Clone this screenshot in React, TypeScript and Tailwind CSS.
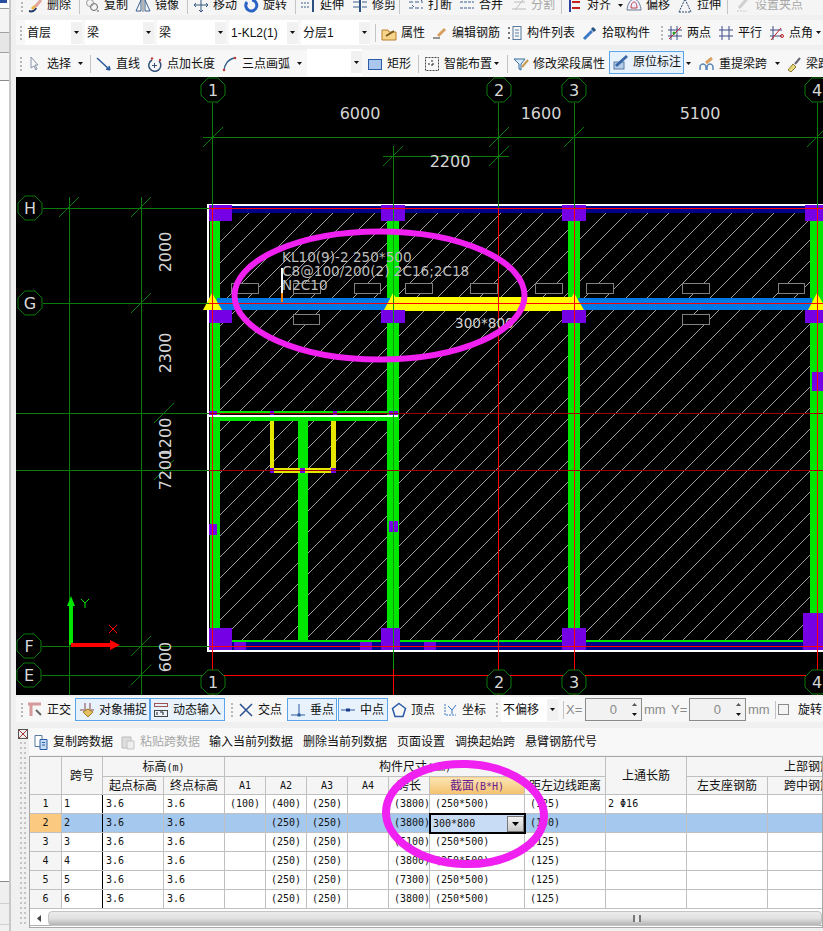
import React from "react";

const mono = "[font-family:'DejaVu_Sans_Mono',monospace] text-[10px]";

function I({ children }: { children: React.ReactNode }) {
  return (
    <svg viewBox="0 0 16 16" className="w-4 h-4 shrink-0" fill="none">
      {children}
    </svg>
  );
}

function Tool({
  icon,
  label,
  grey,
  className = "",
}: {
  icon?: React.ReactNode;
  label: string;
  grey?: boolean;
  className?: string;
}) {
  return (
    <div className={`flex items-center shrink-0 h-full ${className}`}>
      <div className="w-5 flex items-center shrink-0">{icon}</div>
      <span className={`text-xs leading-none whitespace-nowrap ${grey ? "text-[#a8a8a8]" : "text-[#111]"}`}>{label}</span>
    </div>
  );
}

function Grip({ className = "" }: { className?: string }) {
  return (
    <div className={`flex flex-col items-center justify-center gap-[2px] shrink-0 ${className}`}>
      {[0, 1, 2, 3].map((i) => (
        <div key={i} className="w-[2px] h-[2px] bg-[#b8b8b8]" />
      ))}
    </div>
  );
}

function Sep({ className = "" }: { className?: string }) {
  return <div className={`w-px h-[18px] bg-[#c4c4c4] shrink-0 ${className}`} />;
}

function Caret({ className = "" }: { className?: string }) {
  return (
    <svg viewBox="0 0 5 3" className={`w-[5px] h-[3px] shrink-0 ${className}`}>
      <path d="M0 0h5L2.5 3z" fill="#111" />
    </svg>
  );
}

function Select({ label, className = "" }: { label?: string; className?: string }) {
  return (
    <div className={`h-full bg-white flex items-center shrink-0 ${className}`}>
      <span className="flex-1 pl-[2px] text-xs leading-none whitespace-nowrap text-[#111]">{label}</span>
      <div className="w-[11px] h-[22px] bg-[#f1f1f1] flex items-center justify-center">
        <Caret />
      </div>
    </div>
  );
}

function Spin({ className = "" }: { className?: string }) {
  return (
    <div className={`h-[23px] border border-[#8a8a8a] bg-[#f2f2f2] flex items-center shrink-0 ${className}`}>
      <span className="flex-1 text-right pr-[10px] text-[13px] leading-none text-[#8a8a8a]">0</span>
      <div className="w-[14px] flex flex-col items-center gap-[7px]">
        <svg viewBox="0 0 5 3" className="w-[5px] h-[3px]"><path d="M0 3h5L2.5 0z" fill="#555" /></svg>
        <Caret />
      </div>
    </div>
  );
}

// ---- toolbar icons ----
const icons = {
  brush: (
    <I>
      <path d="M2 14c3 1 6 0 7-3" stroke="#223a66" strokeWidth="2" />
      <path d="M8 10l6-7" stroke="#e0a89a" strokeWidth="3" />
      <path d="M5 12l3-3" stroke="#e8b64c" strokeWidth="3" />
    </I>
  ),
  copy: (
    <I>
      <circle cx="10" cy="10" r="3.5" stroke="#666" />
      <circle cx="6" cy="6" r="3.5" stroke="#999" />
      <path d="M1 2h2M13 14h2" stroke="#555" />
    </I>
  ),
  mirror: (
    <I>
      <path d="M1 14L6 3v11zM15 14L10 3v11z" stroke="#37618f" />
      <path d="M8 1v14" stroke="#777" />
    </I>
  ),
  move: (
    <I>
      <path d="M8 1v14M1 8h14M8 1L6 3M8 1l2 2M8 15l-2-2M8 15l2-2M1 8l2-2M1 8l2 2M15 8l-2-2M15 8l-2 2" stroke="#34587f" />
    </I>
  ),
  rotate: (
    <I>
      <path d="M9 3a5.5 5.5 0 1 1-5 2" stroke="#2a63c4" strokeWidth="3" />
    </I>
  ),
  extend: (
    <I>
      <path d="M1 6h8M1 10h8" stroke="#3a5f8f" strokeDasharray="2 1" />
      <path d="M13 1v14" stroke="#2a4f80" strokeWidth="2" />
    </I>
  ),
  trim: (
    <I>
      <path d="M1 5h6M1 10h6M10 5h5M10 10h5" stroke="#3a5f8f" />
      <path d="M8 1v14" stroke="#2a4f80" strokeWidth="2" />
    </I>
  ),
  split: (
    <I>
      <path d="M1 5h14M1 11h14" stroke="#3a5f8f" strokeDasharray="4 2" />
      <path d="M12 2l2 2M4 8l2 2" stroke="#3a5f8f" />
    </I>
  ),
  merge: (
    <I>
      <path d="M1 5h14M1 11h14" stroke="#3a5f8f" strokeDasharray="3 1" />
    </I>
  ),
  cut: (
    <I>
      <path d="M1 12h14M3 5h11M4 13l8-10" stroke="#bcbcbc" />
    </I>
  ),
  align: (
    <I>
      <path d="M3 1v14" stroke="#2a3f9f" strokeWidth="2" />
      <path d="M5 5h8M5 11h8" stroke="#c02020" strokeWidth="2" />
    </I>
  ),
  offset: (
    <I>
      <path d="M1 13c0-4 3-11 7-11s7 7 7 11z" stroke="#6a7a90" fill="#eef" />
      <path d="M5 11c0-3 1-6 3-6s3 3 3 6z" stroke="#c04040" />
    </I>
  ),
  stretch: (
    <I>
      <path d="M2 15h12L8 2z" stroke="#2a4470" strokeDasharray="2 1" />
    </I>
  ),
  grip: (
    <I>
      <path d="M2 14h10" stroke="#c8c8c8" strokeDasharray="2 1" />
      <path d="M4 11l8-9" stroke="#d0d0d0" strokeWidth="3" />
    </I>
  ),
  props: (
    <I>
      <path d="M1 5h6l1 2h7v8H1z" fill="#f6d58b" stroke="#b87f2e" />
      <path d="M5 11l8-5" stroke="#7a5a20" strokeWidth="2" />
    </I>
  ),
  edit: (
    <I>
      <path d="M1 13h7" stroke="#333" />
      <path d="M6 11l7-7" stroke="#d8a060" strokeWidth="3" />
    </I>
  ),
  list: (
    <I>
      <path d="M2 2v2M2 7v2M2 12v2" stroke="#777" strokeWidth="2" />
      <rect x="6" y="1.5" width="8" height="13" stroke="#5a7aa0" />
      <path d="M8 5h4M8 8h4M8 11h4" stroke="#5a7aa0" />
    </I>
  ),
  pick: (
    <I>
      <path d="M2 14l8-8" stroke="#3a78c8" strokeWidth="3" />
      <path d="M10 3l3 3" stroke="#22507f" strokeWidth="3" />
    </I>
  ),
  twoPt: (
    <I>
      <path d="M4 1v14M10 1v14M1 5h14M1 11h14" stroke="#3c4c88" />
      <path d="M2 14L14 2" stroke="#c02020" />
      <circle cx="7" cy="8" r="1.5" fill="#20a020" />
    </I>
  ),
  parallel: (
    <I>
      <path d="M4 1v14M11 1v14M1 5h14M1 11h14" stroke="#3c4c88" />
    </I>
  ),
  angle: (
    <I>
      <path d="M4 1v14M1 5h12M1 11h12" stroke="#3c4c88" />
      <path d="M2 15L12 3" stroke="#c02020" />
      <circle cx="13" cy="11" r="1.5" stroke="#c02020" />
    </I>
  ),
  arrow: (
    <I>
      <path d="M4 1v11l3-2 2 4 1-1-2-4h3z" fill="#f6f6f6" stroke="#8a94a8" />
    </I>
  ),
  line: (
    <I>
      <path d="M1 2l13 12M14 14l-4-1M14 14l-1-4" stroke="#2a5c9c" strokeWidth="1.5" />
    </I>
  ),
  ptLen: (
    <I>
      <path d="M12 5a6 6 0 1 1-7-1" stroke="#34507a" strokeWidth="1.5" />
      <path d="M5 9.5h5M7.5 7v5" stroke="#34507a" />
      <circle cx="5" cy="2.5" r="1.2" fill="#c04040" />
      <circle cx="13" cy="4" r="1.2" fill="#c04040" />
    </I>
  ),
  arc: (
    <I>
      <path d="M2 15C2 9 6 3 13 2" stroke="#30608f" strokeWidth="1.5" />
      <circle cx="2" cy="14" r="1.3" fill="#c04040" />
      <circle cx="13" cy="2" r="1.3" fill="#c04040" />
    </I>
  ),
  rect: (
    <I>
      <rect x="1.5" y="3.5" width="13" height="10" fill="#a9c6ec" stroke="#2a5caa" />
    </I>
  ),
  smart: (
    <I>
      <rect x="1.5" y="1.5" width="13" height="13" stroke="#444" strokeDasharray="2 1" />
      <path d="M8 4v8M4 8h8" stroke="#222" strokeDasharray="2 2" />
    </I>
  ),
  modify: (
    <I>
      <path d="M1 3h11L8 8v6l-2-1V8z" stroke="#3a6f9f" fill="#d7ebfa" />
      <path d="M9 11l6-7" stroke="#c89a50" strokeWidth="2" />
    </I>
  ),
  mark: (
    <I>
      <rect x="1" y="8" width="10" height="7" fill="#b4cde8" stroke="#5a7aa0" />
      <path d="M3 12L14 2" stroke="#3a68a8" strokeWidth="3" />
    </I>
  ),
  respan: (
    <I>
      <path d="M1 14v-3c0-2 2-3 3-3s3 1 3 3v3M8 14v-3c0-2 2-3 3-3s3 1 3 3v3" stroke="#5a88b8" strokeWidth="1.5" />
      <path d="M7 7l6-5" stroke="#d8a060" strokeWidth="3" />
    </I>
  ),
  sweep: (
    <I>
      <path d="M2 14l5-6 3 3-5 5z" fill="#e8d880" stroke="#8a7a30" />
      <path d="M9 8l5-6" stroke="#667" strokeWidth="2" />
    </I>
  ),
  ortho: (
    <I>
      <path d="M1 2h13M4 2v12" stroke="#d69a9a" strokeWidth="3" />
      <path d="M9 8l5 5" stroke="#666" strokeWidth="2" />
    </I>
  ),
  snap: (
    <I>
      <path d="M1 8h14M6 1v6M11 1v6" stroke="#844" />
      <path d="M4 10l5-3 5 3-5 5z" fill="#e4c060" stroke="#a07820" />
    </I>
  ),
  dyn: (
    <I>
      <rect x="1.5" y="1.5" width="13" height="3" stroke="#a05050" />
      <rect x="1.5" y="8.5" width="13" height="6" stroke="#444" />
      <path d="M4 10v3M7 10h3v3" stroke="#222" />
    </I>
  ),
  cross: (
    <I>
      <path d="M2 2l12 12M14 2L2 14" stroke="#2a4f90" strokeWidth="1.5" />
    </I>
  ),
  perp: (
    <I>
      <path d="M1 13h14M9 2v11" stroke="#2a5c9c" />
      <rect x="7.5" y="11.5" width="3" height="3" fill="#2a5c9c" />
    </I>
  ),
  mid: (
    <I>
      <path d="M1 8h14" stroke="#2a5c9c" />
      <rect x="6" y="6.5" width="4" height="3" fill="#1a3c8c" />
    </I>
  ),
  vertex: (
    <I>
      <path d="M8 1.5l6.5 5-2.5 8H4l-2.5-8z" stroke="#2a5ca8" strokeWidth="1.5" />
    </I>
  ),
  coord: (
    <I>
      <path d="M3 2v11h11" stroke="#3a78c8" strokeDasharray="2 1" />
      <path d="M6 4l4 4 4-5M10 8v4" stroke="#3a78c8" />
    </I>
  ),
  copyDoc: (
    <I>
      <path d="M2 1.5h7v11H2z" fill="#fff" stroke="#5a7aa0" />
      <path d="M7 5.5h7v10H7z" fill="#c6dcf4" stroke="#2a5ca8" />
      <path d="M9 8.5h3M9 11h3" stroke="#2a5ca8" />
    </I>
  ),
  paste: (
    <I>
      <path d="M2 3h9v11H2z" fill="#ddd" stroke="#bbb" />
      <path d="M7 7h7v8H7z" fill="#eee" stroke="#c4c4c4" />
    </I>
  ),
};

// ---- canvas ----
function bubble(cx: number, cy: number) {
  const pts = Array.from({ length: 8 }).map((_, i) => {
    const a = (i * Math.PI) / 4 + Math.PI / 8;
    return `${cx + 13 * Math.cos(a)},${cy + 13 * Math.sin(a)}`;
  });
  return pts.join(" ");
}

const green = "#0a7a0a";
const red = "#ff0000";
const darkRed = "#a00000";
const purple = "#7500e6";
const beam = "#00e600";

const bubbles: [number, number, string][] = [
  [213, 90, "1"],
  [499, 90, "2"],
  [574, 90, "3"],
  [817, 90, "4"],
  [213, 682, "1"],
  [499, 682, "2"],
  [574, 682, "3"],
  [817, 682, "4"],
  [30, 208, "H"],
  [30, 303, "G"],
  [29, 646, "F"],
  [29, 675, "E"],
];
const ticks: [number, number][] = [
  [213, 137],
  [499, 137],
  [574, 137],
  [817, 137],
  [393, 156],
  [499, 156],
  [69, 207],
  [141, 207],
  [141, 303],
  [164, 413],
  [164, 470],
  [141, 646],
  [141, 675],
];
const boxes: [number, number, number][] = [
  [231, 283, 27],
  [293, 283, 27],
  [354, 283, 26],
  [405, 283, 27],
  [470, 283, 27],
  [535, 283, 27],
  [586, 283, 27],
  [682, 283, 27],
  [778, 283, 26],
  [293, 314, 26],
  [682, 314, 27],
];
const purples: [number, number, number, number][] = [
  [209, 205, 23, 16],
  [381, 205, 24, 16],
  [562, 205, 24, 16],
  [805, 205, 18, 16],
  [209, 310, 23, 13],
  [381, 310, 24, 13],
  [562, 310, 24, 13],
  [805, 310, 18, 13],
  [209, 628, 23, 22],
  [381, 628, 19, 22],
  [562, 628, 24, 22],
  [803, 613, 20, 37],
  [234, 642, 12, 8],
  [360, 642, 12, 8],
  [424, 642, 12, 8],
  [209, 524, 8, 11],
  [389, 521, 9, 11],
  [812, 372, 11, 19],
  [209, 411, 8, 4],
  [270, 411, 4, 4],
  [333, 411, 4, 4],
  [389, 411, 9, 4],
  [270, 468, 4, 5],
  [300, 468, 5, 5],
  [331, 468, 5, 5],
];

function Drawing() {
  return (
    <svg viewBox="16 77 807 618" className="w-[807px] h-[618px] bg-black block shrink-0" shapeRendering="crispEdges">
      <defs>
        <pattern id="hatch" width="21" height="21" patternUnits="userSpaceOnUse">
          <path d="M0 21L21 0" stroke="#c8c8c8" strokeWidth="0.8" shapeRendering="auto" />
        </pattern>
      </defs>

      {/* hatching */}
      <rect x="220" y="213" width="167" height="198" fill="url(#hatch)" />
      <rect x="399" y="213" width="169" height="427" fill="url(#hatch)" />
      <rect x="580" y="213" width="230" height="427" fill="url(#hatch)" />
      <rect x="220" y="421" width="78" height="219" fill="url(#hatch)" />
      <rect x="308" y="421" width="79" height="219" fill="url(#hatch)" />

      {boxes.map(([x, y, w], i) => (
        <rect key={i} x={x + 0.5} y={y + 0.5} width={w} height={10} fill="#000" stroke="#808080" />
      ))}

      {/* beams */}
      <rect x="207" y="204" width="616" height="2" fill="#fff" />
      <rect x="207" y="650" width="616" height="2" fill="#fff" />
      <rect x="207" y="204" width="2" height="448" fill="#fff" />
      <rect x="209" y="206" width="614" height="7" fill="#00008b" />
      <rect x="232" y="642" width="591" height="8" fill="#00008b" />
      <rect x="210" y="213" width="10" height="435" fill={beam} />
      <rect x="387" y="213" width="12" height="435" fill={beam} />
      <rect x="568" y="213" width="12" height="435" fill={beam} />
      <rect x="810" y="213" width="13" height="435" fill={beam} />
      <rect x="298" y="417" width="10" height="224" fill={beam} />
      <rect x="220" y="411" width="167" height="3" fill={beam} />
      <rect x="209" y="415" width="189" height="2" fill="#fff" />
      <rect x="220" y="417" width="167" height="4" fill={beam} />
      <rect x="232" y="640" width="578" height="2" fill={beam} />

      {/* yellow stirrup frame */}
      <rect x="270" y="421" width="4" height="51" fill="#e6e600" />
      <rect x="331" y="421" width="5" height="51" fill="#e6e600" />
      <rect x="270" y="468" width="66" height="5" fill="#e6e600" />

      {/* beam being edited */}
      <rect x="217" y="298" width="176" height="12" fill="#0078e6" />
      <rect x="393" y="297" width="181" height="14" fill="#ffff00" />
      <rect x="578" y="298" width="234" height="12" fill="#0078e6" />

      {purples.map(([x, y, w, h], i) => (
        <rect key={i} x={x} y={y} width={w} height={h} fill={purple} />
      ))}

      {[212, 393, 574, 817].map((x) => (
        <path key={x} d={`M${x} 293l10 17h-19z`} fill="#ffff00" shapeRendering="auto" />
      ))}

      {/* axis lines */}
      {[69, 141].map((x) => (
        <line key={x} x1={x + 0.5} y1="197" x2={x + 0.5} y2="695" stroke={green} />
      ))}
      {[212, 393, 498, 574, 817].map((x) => (
        <g key={x}>
          <line x1={x + 0.5} y1={x === 393 ? 146 : 103} x2={x + 0.5} y2="208" stroke={green} />
          <line x1={x + 0.5} y1="208" x2={x + 0.5} y2="669" stroke={x === 393 ? "#0a9a0a" : red} />
          <line x1={x + 0.5} y1="669" x2={x + 0.5} y2="695" stroke={red} />
        </g>
      ))}
      <line x1="203" y1="137.5" x2="823" y2="137.5" stroke={green} />
      <line x1="383" y1="156.5" x2="509" y2="156.5" stroke={green} />
      {[
        [208, 43, green, red],
        [303, 43, green, red],
        [413, 16, green, darkRed],
        [470, 16, green, darkRed],
        [646, 42, green, red],
        [675, 42, green, red],
      ].map(([y, start, a, b]) => (
        <g key={y as number}>
          <line x1={start as number} y1={(y as number) + 0.5} x2="209" y2={(y as number) + 0.5} stroke={a as string} />
          <line x1="209" y1={(y as number) + 0.5} x2="823" y2={(y as number) + 0.5} stroke={b as string} />
        </g>
      ))}
      {ticks.map(([x, y], i) => (
        <line key={i} x1={x - 10} y1={y + 10} x2={x + 10} y2={y - 10} stroke={green} shapeRendering="auto" />
      ))}

      {/* axis bubbles */}
      <g shapeRendering="auto" fontFamily="'DejaVu Sans', sans-serif">
        {bubbles.map(([x, y, t], i) => (
          <g key={i}>
            <polygon points={bubble(x, y)} fill="#000" stroke={green} />
            <text x={x} y={y + 6} fontSize="16" textAnchor="middle" fill="#d8d8d8">
              {t}
            </text>
          </g>
        ))}

        {/* dimensions */}
        <g fill="#d4d4d4" fontSize="16" textAnchor="middle">
          <text x="360" y="119">6000</text>
          <text x="541" y="119">1600</text>
          <text x="700" y="119">5100</text>
          <text x="450" y="167">2200</text>
          {[
            [252, "2000"],
            [353, "2300"],
            [438, "1200"],
            [470, "7200"],
            [657, "600"],
          ].map(([y, t]) => (
            <text key={t as string} x="171" y={y as number} transform={`rotate(-90 171 ${y})`}>
              {t}
            </text>
          ))}
        </g>

        {/* origin marker */}
        <path d="M69 645V606h-2l4-10 4 10h-2v39z" fill="#00e600" />
        <path d="M71 643h39v-3l10 5-10 5v-3H71z" fill="#ff0000" />
        <path d="M81 599l4 4 4-4M85 603v5" stroke="#00e600" />
        <path d="M109 625l8 8M117 625l-8 8" stroke="#ff0000" />

        {/* beam labels */}
        <g fill="#bdbdbd" fontSize="13.6">
          <text x="282" y="262">KL10(9)-2 250*500</text>
          <text x="282" y="276">C8@100/200(2) 2C16;2C18</text>
          <text x="282" y="290">N2C10</text>
          <text x="455" y="328" fill="#d4d4d4">300*800</text>
        </g>
        <rect x="281" y="268" width="2" height="25" fill="#fff" />
        <rect x="281" y="293" width="2" height="9" fill="#ff8000" />

        <ellipse cx="379.5" cy="295.5" rx="145" ry="64" fill="none" stroke="#f020f0" strokeWidth="6" />
      </g>
    </svg>
  );
}

// ---- span table ----
const rows = [
  { a1: "(100)", a2: "(400)", a3: "(250)", len: "(3800)", sec: "(250*500)", dist: "(125)", top: "2 Φ16" },
  { a1: "", a2: "(250)", a3: "(250)", len: "(3800)", sec: "", dist: "(150)", top: "" },
  { a1: "", a2: "(250)", a3: "(250)", len: "(5100)", sec: "(250*500)", dist: "(125)", top: "" },
  { a1: "", a2: "(250)", a3: "(250)", len: "(3800)", sec: "(250*500)", dist: "(125)", top: "" },
  { a1: "", a2: "(250)", a3: "(250)", len: "(7300)", sec: "(250*500)", dist: "(125)", top: "" },
  { a1: "", a2: "(250)", a3: "(250)", len: "(3800)", sec: "(250*500)", dist: "(125)", top: "" },
];

const th = "border border-[#c0c0c0] bg-[#f5f5f5] font-normal text-xs leading-none text-[#111] p-0 text-center whitespace-nowrap overflow-hidden";
const td = `border border-[#c0c0c0] p-0 leading-none text-[#111] ${mono} whitespace-nowrap overflow-hidden`;

function SpanTable() {
  return (
    <div className="h-[172px] border border-[#a8a8a8] bg-white overflow-hidden flex flex-col">
      <table className="table-fixed border-collapse w-[900px] -ml-px -mt-px shrink-0">
        <colgroup>
          <col className="w-[32px]" />
          <col className="w-[41px]" />
          <col className="w-[61px]" />
          <col className="w-[61px]" />
          <col className="w-[41px]" />
          <col className="w-[41px]" />
          <col className="w-[41px]" />
          <col className="w-[41px]" />
          <col className="w-[41px]" />
          <col className="w-[95px]" />
          <col className="w-[81px]" />
          <col className="w-[81px]" />
          <col className="w-[81px]" />
          <col className="w-[81px]" />
          <col className="w-[81px]" />
        </colgroup>
        <thead>
          <tr className="h-[20px]">
            <th rowSpan={2} className={th} />
            <th rowSpan={2} className={th}>跨号</th>
            <th colSpan={2} className={th}>
              标高<span className={mono}>(m)</span>
            </th>
            <th colSpan={7} className={th}>
              构件尺寸<span className={mono}>(mm)</span>
            </th>
            <th rowSpan={2} className={th}>上通长筋</th>
            <th colSpan={3} className={`${th} !text-left pl-[97px]`}>上部钢筋</th>
          </tr>
          <tr className="h-[18px]">
            <th className={th}>起点标高</th>
            <th className={th}>终点标高</th>
            <th className={`${th} ${mono}`}>A1</th>
            <th className={`${th} ${mono}`}>A2</th>
            <th className={`${th} ${mono}`}>A3</th>
            <th className={`${th} ${mono}`}>A4</th>
            <th className={th}>跨长</th>
            <th className="border border-[#c0c0c0] bg-gradient-to-b from-[#fbe6b4] to-[#f4c16c] font-normal text-xs leading-none text-[#6b1a8f] p-0 text-center whitespace-nowrap">
              截面<span className={mono}>(B*H)</span>
            </th>
            <th className={th}>距左边线距离</th>
            <th className={th}>左支座钢筋</th>
            <th className={th}>跨中钢筋</th>
            <th className={th}>右支座钢筋</th>
          </tr>
        </thead>
        <tbody>
          {rows.map((r, i) => {
            const sel = i === 1;
            const bg = sel ? "bg-[#a4c8ee]" : "bg-white";
            return (
              <tr key={i} className={`h-[19px] ${bg}`}>
                <td className={`${td} text-center ${sel ? "bg-[#fbc97f] text-[#6b1a8f]" : "bg-[#f5f5f5]"}`}>{i + 1}</td>
                <td className={`${td} pl-[2px] border-r-black`}>{i + 1}</td>
                <td className={`${td} pl-[3px]`}>3.6</td>
                <td className={`${td} pl-[3px]`}>3.6</td>
                <td className={`${td} pl-[5px]`}>{r.a1}</td>
                <td className={`${td} pl-[5px]`}>{r.a2}</td>
                <td className={`${td} pl-[5px]`}>{r.a3}</td>
                <td className={td} />
                <td className={`${td} pl-[5px]`}>{r.len}</td>
                <td className={`${td} pl-[5px] relative !overflow-visible`}>
                  {sel ? (
                    <div className="absolute -left-px -top-px w-[97px] h-[21px] border-2 border-black bg-[#c9dcf5] flex items-center pl-[2px]">
                      <span className="flex-1">300*800</span>
                      <div className="w-[17px] h-[16px] border border-[#777] bg-gradient-to-b from-[#f4f4f4] to-[#c8c8c8] flex items-center justify-center">
                        <svg viewBox="0 0 7 4" className="w-[7px] h-[4px]"><path d="M0 0h7L3.5 4z" fill="#000" /></svg>
                      </div>
                    </div>
                  ) : (
                    r.sec
                  )}
                </td>
                <td className={`${td} pl-[5px]`}>{r.dist}</td>
                <td className={`${td} pl-[2px]`}>{r.top}</td>
                <td className={td} />
                <td className={td} />
                <td className={td} />
              </tr>
            );
          })}
        </tbody>
      </table>
      {/* horizontal scrollbar */}
      <div className="h-[15px] mt-[2px] flex items-center shrink-0 border-b border-[#b0b0b0]">
        <div className="w-[18px] flex items-center justify-center">
          <svg viewBox="0 0 4 7" className="w-1 h-[7px]"><path d="M4 0v7L0 3.5z" fill="#444" /></svg>
        </div>
        <div className="flex-1 h-[15px] rounded-sm bg-gradient-to-b from-[#ececec] via-[#e0e0e0] to-[#b4b4b4] border border-[#c4c4c4] flex items-center pl-[584px]">
          <div className="w-[8px] h-[7px] border-x-2 border-[#777] bg-[#e8e8e8]" />
        </div>
      </div>
    </div>
  );
}

export default function App() {
  return (
    <div className="relative w-[823px] h-[931px] overflow-hidden bg-[#f0f0f0] flex [font-family:'Liberation_Sans','Noto_Sans_CJK_SC',sans-serif]">
      {/* docked side panel, almost all cut off */}
      <div className="w-[16px] h-full shrink-0 flex">
        <div className="w-[9px] h-full flex flex-col">
          <div className="h-[9px] bg-white border-b border-[#999] relative">
            <div className="w-[7px] h-[3px] bg-[#2a4f9f]" />
          </div>
          <div className="h-[23px] bg-[#f4f4f4]" />
          <div className="h-[21px] bg-[#e6e6e6] border-y border-[#a0a0a0]" />
          <div className="h-[27px] bg-[#f4f4f4]" />
          <div className="h-[802px] bg-white border-y border-[#8a8a8a]" />
          <div className="h-[22px] bg-[#efefef] border-b border-[#d0d0d0]" />
          <div className="h-[21px] bg-[#efefef] border-b border-[#d0d0d0]" />
        </div>
        <div className="w-[2px] h-full bg-[#c8c8c8]" />
      </div>

      <div className="w-[807px] h-full flex flex-col overflow-hidden">
        {/* top toolbar, cut by the screenshot */}
        <div className="h-[15px] overflow-hidden shrink-0 bg-[#f5f5f5]">
          <div className="h-[26px] -mt-[8px] flex items-center">
            <Grip className="w-[11px]" />
            <Tool icon={icons.brush} label="删除" className="w-[52px]" />
            <Sep className="mr-[4px]" />
            <Tool icon={icons.copy} label="复制" className="w-[51px]" />
            <Tool icon={icons.mirror} label="镜像" className="w-[52px]" />
            <Sep className="mr-[5px]" />
            <Tool icon={icons.move} label="移动" className="w-[50px]" />
            <Tool icon={icons.rotate} label="旋转" className="w-[52px]" />
            <Sep className="mr-[4px]" />
            <Tool icon={icons.extend} label="延伸" className="w-[52px]" />
            <Tool icon={icons.trim} label="修剪" className="w-[47px]" />
            <Sep className="mr-[8px]" />
            <Tool icon={icons.split} label="打断" className="w-[51px]" />
            <Tool icon={icons.merge} label="合并" className="w-[52px]" />
            <Tool icon={icons.cut} label="分割" grey className="w-[50px]" />
            <Sep className="mr-[5px]" />
            <Tool icon={icons.align} label="对齐" className="w-[51px]" />
            <Caret className="mr-[3px]" />
            <Tool icon={icons.offset} label="偏移" className="w-[51px]" />
            <Tool icon={icons.stretch} label="拉伸" className="w-[50px]" />
            <Sep className="mr-[7px]" />
            <Tool icon={icons.grip} label="设置夹点" grey className="w-[72px]" />
          </div>
        </div>

        {/* element selectors */}
        <div className="h-[25px] mt-[5px] shrink-0 flex items-center bg-[#f7f7f7]">
          <Grip className="w-[9px]" />
          <Select label="首层" className="w-[57px]" />
          <Select label="梁" className="w-[69px] ml-[3px]" />
          <Select label="梁" className="w-[69px] ml-[3px]" />
          <Select label="1-KL2(1)" className="w-[69px] ml-[3px]" />
          <Select label="分层1" className="w-[69px] ml-[3px]" />
          <Sep className="ml-[5px] mr-[5px]" />
          <Tool icon={icons.props} label="属性" className="w-[51px]" />
          <Tool icon={icons.edit} label="编辑钢筋" className="w-[75px]" />
          <Tool icon={icons.list} label="构件列表" className="w-[75px]" />
          <Tool icon={icons.pick} label="拾取构件" className="w-[75px]" />
          <Grip className="w-[10px]" />
          <Tool icon={icons.twoPt} label="两点" className="w-[51px]" />
          <Tool icon={icons.parallel} label="平行" className="w-[51px]" />
          <Tool icon={icons.angle} label="点角" className="w-[47px]" />
          <Caret />
        </div>

        {/* drawing tools */}
        <div className="h-[27px] mt-[5px] shrink-0 flex items-center bg-[#f7f7f7]">
          <Grip className="w-[9px]" />
          <Tool icon={icons.arrow} label="选择" className="w-[51px] ml-[2px]" />
          <Caret className="mr-[7px]" />
          <Sep className="mr-[5px]" />
          <Tool icon={icons.line} label="直线" className="w-[51px]" />
          <Tool icon={icons.ptLen} label="点加长度" className="w-[75px]" />
          <Tool icon={icons.arc} label="三点画弧" className="w-[75px]" />
          <Caret />
          <Select className="w-[55px] ml-[5px] mb-[3px]" />
          <Tool icon={icons.rect} label="矩形" className="w-[51px] ml-[5px]" />
          <Sep className="mr-[5px]" />
          <Tool icon={icons.smart} label="智能布置" className="w-[70px]" />
          <Caret />
          <Sep className="ml-[8px] mr-[5px]" />
          <Tool icon={icons.modify} label="修改梁段属性" className="w-[96px]" />
          <div className="w-[75px] h-[23px] -mt-[3px] pl-[3px] flex items-center shrink-0 border border-[#5aa5ea] bg-[#e8f2fc]">
            <Tool icon={icons.mark} label="原位标注" />
          </div>
          <Caret className="ml-[2px]" />
          <Tool icon={icons.respan} label="重提梁跨" className="w-[76px] ml-[8px]" />
          <Caret />
          <Tool icon={icons.sweep} label="梁跨" className="ml-[6px]" />
        </div>

        <Drawing />

        {/* snap bar */}
        <div className="h-[25px] mt-[2px] shrink-0 flex items-center bg-[#f7f7f7]">
          <Grip className="w-[11px]" />
          <Tool icon={icons.ortho} label="正交" className="w-[48px]" />
          <div className="w-[75px] h-[23px] pl-[3px] flex items-center shrink-0 border border-[#5aa5ea] bg-[#e8f2fc]">
            <Tool icon={icons.snap} label="对象捕捉" />
          </div>
          <div className="w-[75px] h-[23px] pl-[2px] flex items-center shrink-0 border border-[#5aa5ea] bg-[#e8f2fc]">
            <Tool icon={icons.dyn} label="动态输入" />
          </div>
          <Grip className="w-[13px]" />
          <Tool icon={icons.cross} label="交点" className="w-[49px]" />
          <div className="w-[50px] h-[23px] pl-[2px] flex items-center shrink-0 border border-[#5aa5ea] bg-[#e8f2fc]">
            <Tool icon={icons.perp} label="垂点" />
          </div>
          <div className="w-[50px] h-[23px] ml-px pl-[1px] flex items-center shrink-0 border border-[#5aa5ea] bg-[#e8f2fc]">
            <Tool icon={icons.mid} label="中点" />
          </div>
          <Tool icon={icons.vertex} label="顶点" className="w-[51px] ml-[3px]" />
          <Tool icon={icons.coord} label="坐标" className="w-[50px]" />
          <Grip className="w-[9px]" />
          <Select label="不偏移" className="w-[57px]" />
          <Sep className="ml-[5px]" />
          <span className="w-[19px] ml-[2px] text-[13px] leading-none text-[#8a8a8a] shrink-0">X=</span>
          <Spin className="w-[57px]" />
          <span className="w-[24px] ml-[2px] text-[13px] leading-none text-[#8a8a8a] shrink-0">mm</span>
          <span className="w-[18px] ml-[3px] text-[13px] leading-none text-[#8a8a8a] shrink-0">Y=</span>
          <Spin className="w-[57px]" />
          <span className="w-[24px] ml-[2px] text-[13px] leading-none text-[#8a8a8a] shrink-0">mm</span>
          <Sep className="ml-[3px]" />
          <div className="w-[11px] h-[11px] ml-[2px] border border-[#8a8a8a] bg-[#f4f4f4] shrink-0" />
          <span className="ml-[9px] text-xs leading-none text-[#111] whitespace-nowrap">旋转</span>
        </div>

        {/* span editor: grip column + toolbar + table */}
        <div className="mt-[6px] flex">
          <div className="w-[13px] shrink-0 flex flex-col items-center">
            <svg viewBox="0 0 10 10" className="w-[10px] h-[10px] mt-px shrink-0">
              <rect x=".5" y=".5" width="9" height="9" fill="#eee" stroke="#555" />
              <path d="M1 1l8 8M9 1L1 9" stroke="#a33" />
            </svg>
            <div className="mt-[3px] flex flex-col gap-[3px]">
              {Array.from({ length: 37 }).map((_, i) => (
                <div key={i} className="flex gap-[2px]">
                  <div className="w-[2px] h-[2px] bg-[#c4c4c4]" />
                  <div className="w-[2px] h-[2px] bg-[#c4c4c4]" />
                </div>
              ))}
            </div>
          </div>
          <div className="flex-1 flex flex-col min-w-0">
            <div className="h-[27px] flex items-center pl-[4px] bg-[#f8f8f8] shrink-0">
              <Tool icon={icons.copyDoc} label="复制跨数据" className="w-[87px]" />
              <Tool icon={icons.paste} label="粘贴跨数据" grey className="w-[89px]" />
              <span className="w-[94px] shrink-0 text-xs leading-none text-[#111]">输入当前列数据</span>
              <span className="w-[94px] shrink-0 text-xs leading-none text-[#111]">删除当前列数据</span>
              <span className="w-[58px] shrink-0 text-xs leading-none text-[#111]">页面设置</span>
              <span className="w-[70px] shrink-0 text-xs leading-none text-[#111]">调换起始跨</span>
              <span className="shrink-0 text-xs leading-none text-[#111]">悬臂钢筋代号</span>
            </div>
            <div className="mt-px">
              <SpanTable />
            </div>
          </div>
        </div>
      </div>

      {/* hand-drawn highlight on the screenshot */}
      <svg viewBox="0 0 180 125" className="absolute left-[375px] top-[752px] w-[180px] h-[125px] pointer-events-none">
        <ellipse cx="90" cy="62" rx="79" ry="50" fill="none" stroke="#f020f0" strokeWidth="8" transform="rotate(2 90 62)" />
      </svg>
    </div>
  );
}
